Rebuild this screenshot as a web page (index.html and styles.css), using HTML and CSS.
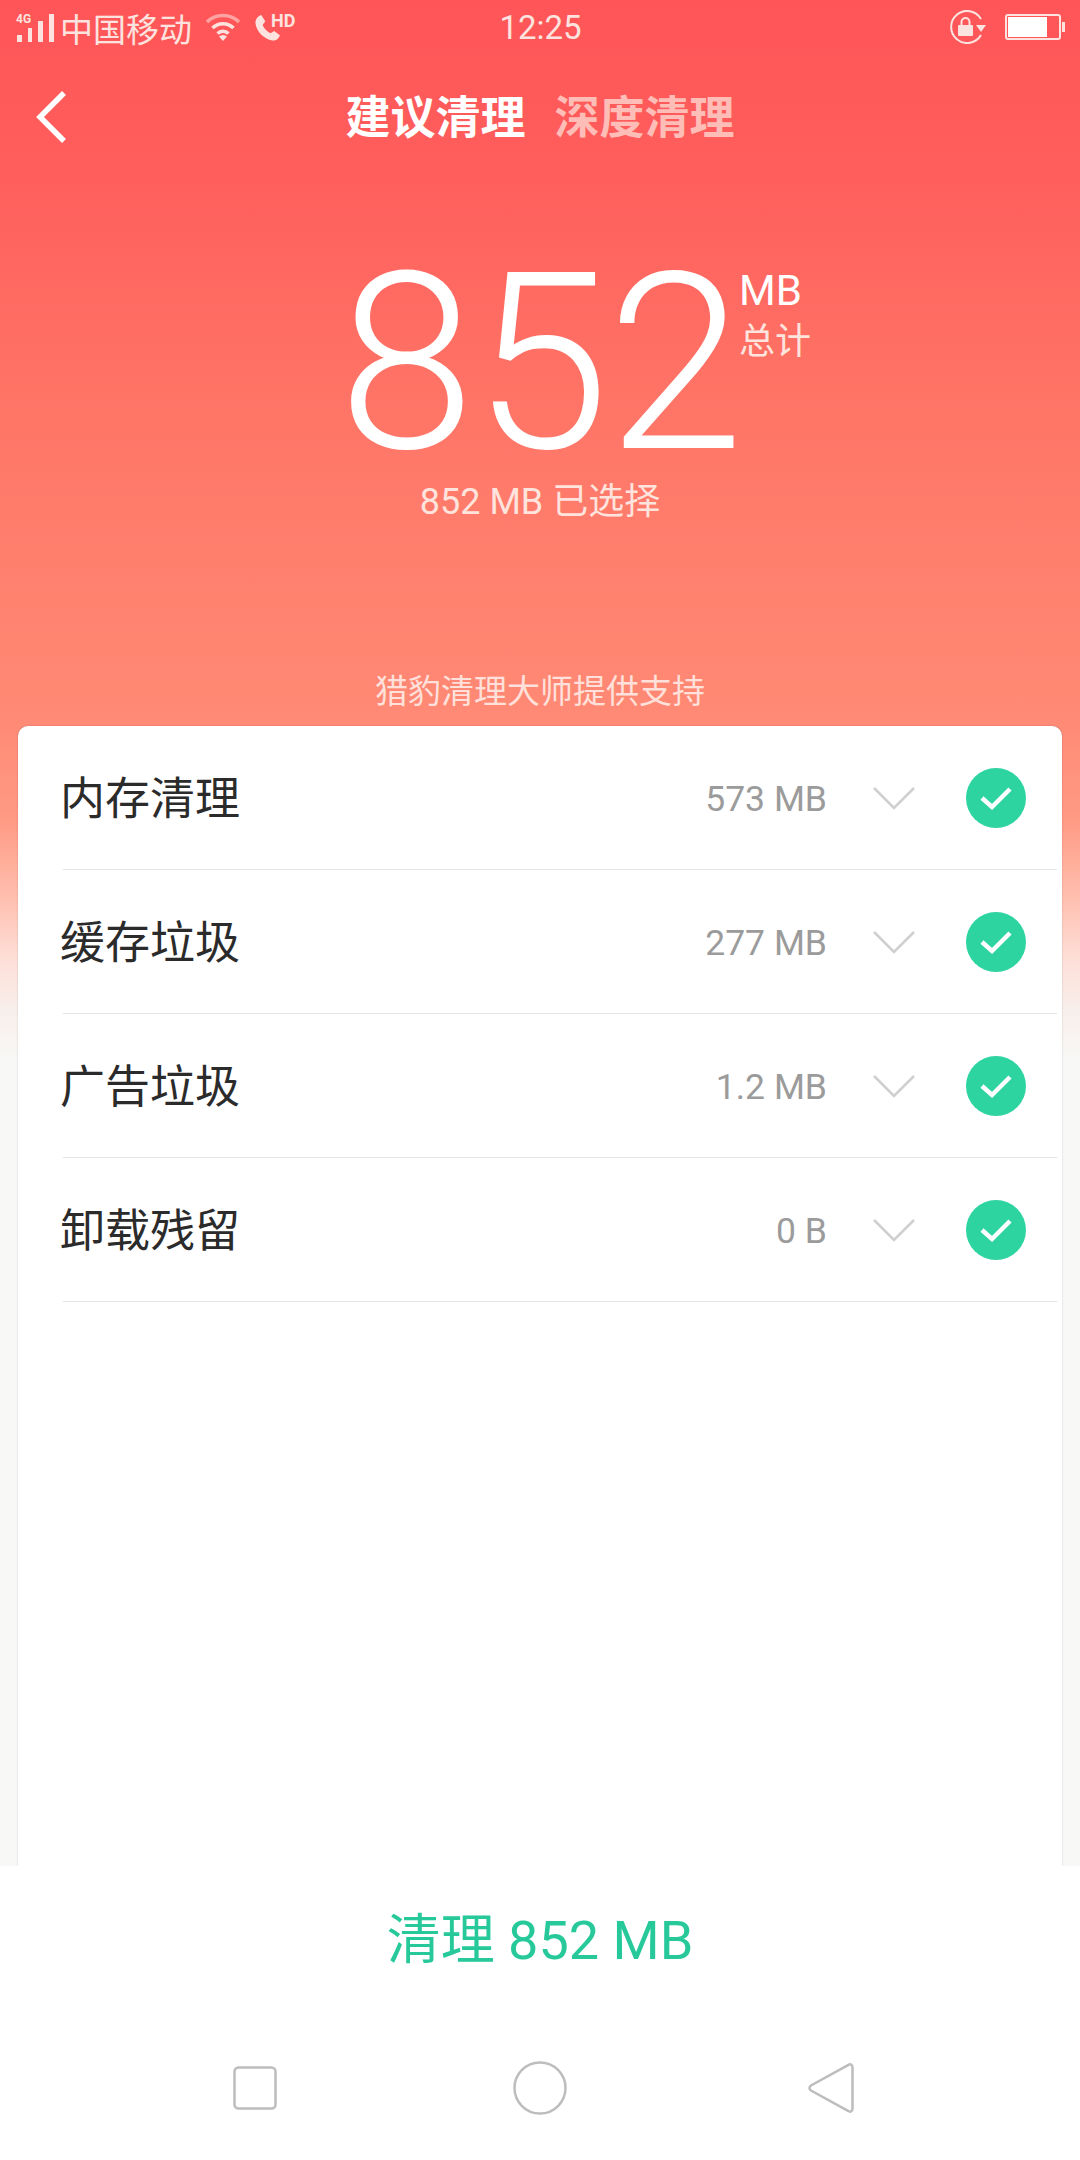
FILE: index.html
```html
<!DOCTYPE html>
<html lang="zh-CN">
<head>
    <meta charset="UTF-8">
    <meta name="viewport" content="width=device-width, initial-scale=1.0">
    <title>建议清理</title>
    <link rel="stylesheet" href="styles.css">
</head>
<body>
    <div class="screen">
        <header class="hero">
            <div class="status-bar">
                <div class="status-left">
                    <span class="signal">
                        <span class="net">4G</span>
                        <svg width="38" height="30" viewBox="0 0 38 30"><g fill="#fde3df"><rect x="1" y="22" width="5" height="7"/><rect x="12" y="15" width="4" height="14"/><rect x="22" y="8" width="5" height="21"/><rect x="33" y="1" width="5" height="28"/></g></svg>
                    </span>
                    <span class="carrier">中国移动</span>
                    <svg class="wifi" width="36" height="30" viewBox="0 0 36 30"><g fill="none" stroke="#fde3df" stroke-width="3.5"><path d="M2 9a23 23 0 0 1 32 0" opacity=".55"/><path d="M7.500 15a15 15 0 0 1 21 0"/><path d="M12.500 20.500a8 8 0 0 1 11 0"/></g><path d="M18 28l-4-4.500a6 6 0 0 1 8 0z" fill="#fde3df"/></svg>
                    <span class="call">
                        <svg width="30" height="30" viewBox="0 0 24 24"><path d="M6.600 1.500l3.200 5.100-2.100 2.900c1 2.700 3.500 5.400 6.300 6.700l2.900-1.800 4.600 3.400c-.8 2.800-3.400 4.700-6 4.100C8.600 20.800 2.800 14.500 2 8.300c-.3-3 1.700-5.800 4.600-6.800z" fill="#fde3df"/></svg>
                        <span class="hd">HD</span>
                    </span>
                </div>
                <div class="clock">12:25</div>
                <div class="status-right">
                    <svg width="38" height="34" viewBox="0 0 38 34"><path d="M32 25a16 16 0 1 1 0-16" fill="none" stroke="#fde3df" stroke-width="2"/><path d="M27 15h10l-5 7z" fill="#fde3df"/><rect x="9" y="15" width="15" height="11" rx="1" fill="#fde3df"/><path d="M12.500 15v-3a4 4 0 0 1 8 0v3" fill="none" stroke="#fde3df" stroke-width="2"/></svg>
                    <span class="battery"><span class="battery-level"></span></span>
                </div>
            </div>

            <nav class="title-bar">
                <svg class="back" width="32" height="54" viewBox="0 0 32 54"><path d="M29 3L5 27l24 24" fill="none" stroke="#fff" stroke-width="5.500"/></svg>
                <span class="tab active">建议清理</span>
                <span class="tab">深度清理</span>
            </nav>

            <div class="total">
                <span class="total-num">852</span>
                <div class="total-unit">
                    <span class="unit-mb">MB</span>
                    <span class="unit-label">总计</span>
                </div>
            </div>
            <p class="selected">852 MB 已选择</p>
            <p class="powered">猎豹清理大师提供支持</p>
        </header>

        <main class="card">
            <div class="row">
                <span class="row-name">内存清理</span>
                <span class="row-size">573 MB</span>
                <svg class="chevron" width="44" height="24" viewBox="0 0 44 24"><path d="M2 2l20 20L42 2" fill="none" stroke="#cfcfcf" stroke-width="2.500"/></svg>
                <svg class="check" width="60" height="60" viewBox="0 0 60 60"><circle cx="30" cy="30" r="30" fill="#2dd4a0"/><path d="M16 30l10 9 18-18" fill="none" stroke="#fff" stroke-width="4.500"/></svg>
            </div>
            <div class="row">
                <span class="row-name">缓存垃圾</span>
                <span class="row-size">277 MB</span>
                <svg class="chevron" width="44" height="24" viewBox="0 0 44 24"><path d="M2 2l20 20L42 2" fill="none" stroke="#cfcfcf" stroke-width="2.500"/></svg>
                <svg class="check" width="60" height="60" viewBox="0 0 60 60"><circle cx="30" cy="30" r="30" fill="#2dd4a0"/><path d="M16 30l10 9 18-18" fill="none" stroke="#fff" stroke-width="4.500"/></svg>
            </div>
            <div class="row">
                <span class="row-name">广告垃圾</span>
                <span class="row-size">1.2 MB</span>
                <svg class="chevron" width="44" height="24" viewBox="0 0 44 24"><path d="M2 2l20 20L42 2" fill="none" stroke="#cfcfcf" stroke-width="2.500"/></svg>
                <svg class="check" width="60" height="60" viewBox="0 0 60 60"><circle cx="30" cy="30" r="30" fill="#2dd4a0"/><path d="M16 30l10 9 18-18" fill="none" stroke="#fff" stroke-width="4.500"/></svg>
            </div>
            <div class="row">
                <span class="row-name">卸载残留</span>
                <span class="row-size">0 B</span>
                <svg class="chevron" width="44" height="24" viewBox="0 0 44 24"><path d="M2 2l20 20L42 2" fill="none" stroke="#cfcfcf" stroke-width="2.500"/></svg>
                <svg class="check" width="60" height="60" viewBox="0 0 60 60"><circle cx="30" cy="30" r="30" fill="#2dd4a0"/><path d="M16 30l10 9 18-18" fill="none" stroke="#fff" stroke-width="4.500"/></svg>
            </div>
        </main>

        <footer class="footer">
            <div class="clean-btn">清理 852 MB</div>
            <div class="nav-bar">
                <svg width="44" height="44" viewBox="0 0 44 44"><rect x="1.500" y="1.500" width="41" height="41" rx="4" fill="none" stroke="#bdbdbd" stroke-width="2.500"/></svg>
                <svg class="nav-home" width="54" height="54" viewBox="0 0 54 54"><circle cx="27" cy="27" r="25.500" fill="none" stroke="#bdbdbd" stroke-width="2.500"/></svg>
                <svg width="46" height="52" viewBox="0 0 46 52"><path d="M40 3.200c2.400-1.700 4.500-.7 4.500 2v41.600c0 2.700-2.100 3.700-4.500 2L3 28.500c-2-1.500-2-3.500 0-5z" fill="none" stroke="#bdbdbd" stroke-width="2.500"/></svg>
            </div>
        </footer>
    </div>
</body>
</html>
```

FILE: styles.css
```css
* {
    box-sizing: border-box;
}
html, body {
    margin: 0;
    padding: 0;
}
body {
    font-family: Roboto, "Noto Sans CJK SC", sans-serif;
}
.screen {
    width: 1080px;
    height: 2160px;
    display: flex;
    flex-direction: column;
    background: linear-gradient(180deg, #ff5558 0, #ff5e5c 170px, #ff7466 400px, #ff8a75 720px, #ff9a84 820px, #ffc0b0 900px, #fddfd8 960px, #f8efeb 1010px, #f8f8f6 1060px, #f8f8f6 100%);
}
.hero {
    height: 726px;
    flex: none;
}
.status-bar {
    height: 56px;
    padding: 10px 15px 0 16px;
    display: flex;
    align-items: flex-start;
    justify-content: space-between;
    color: #fde3df;
}
.status-left {
    width: 400px;
    display: flex;
    align-items: center;
    height: 36px;
}
.signal {
    position: relative;
    width: 38px;
    height: 30px;
}
.net {
    position: absolute;
    left: 0;
    top: 0;
    font-size: 12px;
    line-height: 12px;
    font-weight: 700;
}
.carrier {
    font-size: 33px;
    margin-left: 6px;
}
.wifi {
    margin-left: 13px;
}
.call {
    display: flex;
    margin-left: 12px;
    position: relative;
}
.hd {
    position: absolute;
    left: 18px;
    top: -2px;
    font-size: 18px;
    line-height: 20px;
    font-weight: 700;
}
.clock {
    font-size: 33px;
    line-height: 36px;
}
.status-right {
    width: 400px;
    display: flex;
    justify-content: flex-end;
    align-items: center;
    height: 34px;
}
.battery {
    position: relative;
    width: 56px;
    height: 26px;
    margin-left: 18px;
    margin-right: 4px;
    border: 2px solid #fde3df;
    border-radius: 3px;
    padding: 1px;
}
.battery::after {
    content: "";
    position: absolute;
    right: -6px;
    top: 6px;
    width: 3px;
    height: 10px;
    background: #fde3df;
}
.battery-level {
    display: block;
    width: 39px;
    height: 100%;
    background: #fff;
}
.title-bar {
    position: relative;
    height: 120px;
    padding-bottom: 4px;
    display: flex;
    justify-content: center;
    align-items: center;
    gap: 29px;
    font-size: 45px;
    font-weight: 700;
}
.back {
    position: absolute;
    left: 35px;
    top: 34px;
}
.tab {
    color: #ffbdb8;
}
.tab.active {
    color: #fff;
}
.total {
    position: relative;
    height: 228px;
    margin-top: 74px;
    display: flex;
    justify-content: center;
    color: #fff;
}
.total-num {
    font-size: 246px;
    font-weight: 300;
    line-height: 228px;
    letter-spacing: -2px;
}
.total-unit {
    position: absolute;
    left: 739px;
    top: 18px;
    display: flex;
    flex-direction: column;
}
.unit-mb {
    font-size: 42px;
    line-height: 46px;
}
.unit-label {
    font-size: 36px;
    line-height: 40px;
    margin-top: 8px;
    color: #ffe3dd;
}
.selected {
    margin: 0;
    text-align: center;
    font-size: 36px;
    line-height: 48px;
    color: #ffe3dd;
}
.powered {
    margin: 144px 0 0;
    text-align: center;
    font-size: 33px;
    line-height: 44px;
    color: #ffe0da;
}
.card {
    flex: 1;
    margin: 0 18px;
    padding-left: 45px;
    background: #fff;
    border-radius: 10px 10px 0 0;
    box-shadow: 0 0 2px rgba(0, 0, 0, 0.2);
}
.row {
    height: 144px;
    margin-right: 5px;
    display: flex;
    align-items: center;
    padding-right: 31px;
    border-bottom: 1px solid #e4e4e4;
}
.row-name {
    font-size: 45px;
    color: #2b2b2b;
    flex: 1;
    margin-left: -3px;
    padding-bottom: 4px;
}
.row-size {
    font-size: 35.5px;
    color: #9b9b9b;
    padding-top: 2px;
}
.chevron {
    margin-left: 45px;
    margin-right: 50px;
}
.footer {
    flex: none;
    height: 294px;
    background: #fff;
    display: flex;
    flex-direction: column;
}
.clean-btn {
    height: 144px;
    padding-bottom: 6px;
    display: flex;
    align-items: center;
    justify-content: center;
    font-size: 54px;
    color: #27c99a;
}
.nav-bar {
    display: flex;
    justify-content: space-between;
    align-items: center;
    padding: 0 226px 0 233px;
    height: 56px;
    margin-top: 50px;
}
.nav-home {
    margin-right: 5px;
}
```
